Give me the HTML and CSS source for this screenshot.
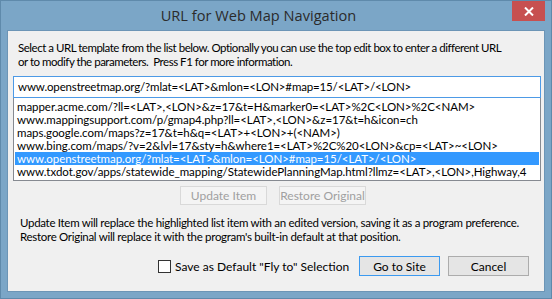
FILE: index.html
```html
<!DOCTYPE html>
<html lang="en">
    <head>
        <title>URL for Web Map Navigation</title>
        <link rel="stylesheet" href="styles.css">
    </head>
    <body>
        <div class="window">
            <!-- Title bar -->
            <div class="titlebar">
                <div class="title">URL for Web Map Navigation</div>
                <div class="close">
                    <svg width="10" height="9" viewBox="0 0 10 9">
                        <path d="M1 0.5 L9 8.5 M9 0.5 L1 8.5" stroke="#fff" stroke-width="2"/>
                    </svg>
                </div>
            </div>

            <!-- Dialog body -->
            <div class="client">
                <p class="intro">Select a URL template from the list below. Optionally you can use the top edit box to enter a different URL<br>or to modify the parameters.&nbsp; Press F1 for more information.</p>

                <div class="edit">www.openstreetmap.org/?mlat=&lt;LAT&gt;&amp;mlon=&lt;LON&gt;#map=15/&lt;LAT&gt;/&lt;LON&gt;</div>
                <ul class="list">
                    <li>mapper.acme.com/?ll=&lt;LAT&gt;,&lt;LON&gt;&amp;z=17&amp;t=H&amp;marker0=&lt;LAT&gt;%2C&lt;LON&gt;%2C&lt;NAM&gt;</li>
                    <li>www.mappingsupport.com/p/gmap4.php?ll=&lt;LAT&gt;,&lt;LON&gt;&amp;z=17&amp;t=h&amp;icon=ch</li>
                    <li>maps.google.com/maps?z=17&amp;t=h&amp;q=&lt;LAT&gt;+&lt;LON&gt;+(&lt;NAM&gt;)</li>
                    <li>www.bing.com/maps/?v=2&amp;lvl=17&amp;sty=h&amp;where1=&lt;LAT&gt;%2C%20&lt;LON&gt;&amp;cp=&lt;LAT&gt;~&lt;LON&gt;</li>
                    <li class="selected">www.openstreetmap.org/?mlat=&lt;LAT&gt;&amp;mlon=&lt;LON&gt;#map=15/&lt;LAT&gt;/&lt;LON&gt;</li>
                    <li>www.txdot.gov/apps/statewide_mapping/StatewidePlanningMap.html?llmz=&lt;LAT&gt;,&lt;LON&gt;,Highway,4</li>
                </ul>

                <div class="edit-buttons">
                    <button class="btn" disabled>Update Item</button>
                    <button class="btn" disabled>Restore Original</button>
                </div>

                <p class="note">Update Item will replace the highlighted list item with an edited version, saving it as a program preference.<br>Restore Original will replace it with the program's built-in default at that position.</p>

                <div class="footer">
                    <label class="check"><span class="box"></span>Save as Default "Fly to" Selection</label>
                    <button class="btn default">Go to Site</button>
                    <button class="btn">Cancel</button>
                </div>
            </div>
        </div>
    </body>
</html>
```

FILE: styles.css
```css
/* Page */
body {
    margin: 0;
    padding: 0;
    background-color: #ffffff;
    font-family: Lato, "Open Sans", sans-serif;
}

/* Window frame */
.window {
    width: 550px;
    height: 297px;
    background-color: #7ba6c7;
    border: 1px solid #5f8aab;
    display: flex;
    flex-direction: column;
}

.titlebar {
    height: 29px;
    display: flex;
    align-items: flex-start;
}

.title {
    flex: 1;
    text-align: center;
    font-family: "Open Sans", sans-serif;
    font-size: 14.6px;
    color: #2b2b2b;
    line-height: 28px;
    padding-left: 4px;
}

.close {
    width: 33px;
    height: 20px;
    margin-right: 6px;
    background-color: #c75050;
    display: flex;
    align-items: center;
    justify-content: center;
}

/* Client area */
.client {
    margin: 0 6px 0 6px;
    height: 260px;
    background-color: #f0f0f0;
    border: 1px solid #6c95b6;
    font-size: 12px;
    color: #000;
}

.intro,
.note {
    margin: 0;
    white-space: nowrap;
    line-height: 14px;
    font-size: 11.5px;
}

.intro {
    padding: 10px 0 0 10px;
    letter-spacing: -0.48px;
}

/* Edit box + list */
.edit {
    margin: 7px 3px 0 5px;
    height: 20px;
    border: 1px solid #4d9ae6;
    background-color: #fff;
    line-height: 20px;
    padding-left: 4px;
    white-space: nowrap;
    font-size: 11.5px;
    letter-spacing: -0.15px;
}

.list {
    list-style: none;
    margin: 0 3px 0 5px;
    padding: 2px 1px;
    height: 78px;
    border: 1px solid #868a91;
    border-top: none;
    background-color: #fff;
    font-size: 11.5px;
    letter-spacing: -0.05px;
}

.list li {
    height: 13px;
    line-height: 13px;
    padding-left: 2px;
    white-space: nowrap;
    overflow: hidden;
}

.list li.selected {
    background-color: #3399ff;
    color: #fff;
}

/* Buttons */
.btn {
    font-family: inherit;
    font-size: 12px;
    width: 87px;
    height: 19px;
    padding: 0;
    border: 1px solid #acacac;
    background-color: #e5e5e5;
    color: #000;
}

.btn:disabled {
    background-color: #f4f4f4;
    border-color: #d9d9d9;
    color: #a0a0a0;
}

.edit-buttons {
    margin-top: 5px;
    display: flex;
    justify-content: center;
    gap: 12px;
    padding-right: 6px;
}

.note {
    padding: 11px 0 0 12px;
    letter-spacing: -0.3px;
}

.footer {
    margin-top: 12px;
    display: flex;
    align-items: center;
    padding-left: 150px;
}

.check {
    display: flex;
    align-items: center;
    gap: 4px;
    width: 201px;
}

.box {
    width: 11px;
    height: 11px;
    border: 1px solid #333;
    background-color: #fff;
}

.footer .btn {
    width: 81px;
    height: 20px;
    margin-right: 8px;
}

.footer .btn.default {
    border-color: #3c9af0;
}
```
